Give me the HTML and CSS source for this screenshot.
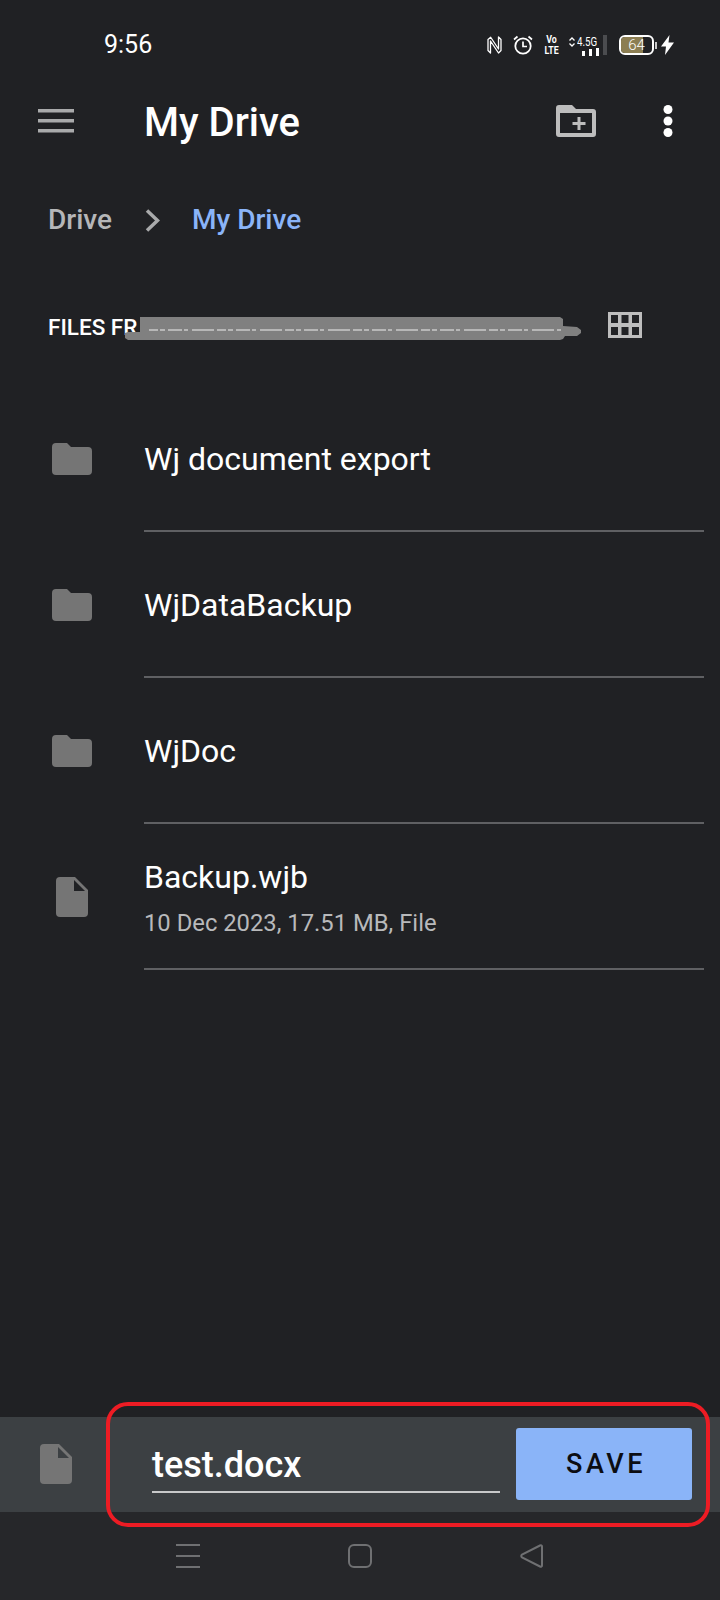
FILE: index.html
```html
<!DOCTYPE html>
<html lang="en">
<head>
  <meta charset="UTF-8">
  <title>My Drive</title>
  <link rel="stylesheet" href="styles.css">
</head>
<body>
  <div class="screen">
    <div class="status-bar">
      <span class="time">9:56</span>
      <div class="status-icons">
        <svg class="ic-nfc" width="15" height="18" viewBox="0 0 15 18"><path d="M4 1 1 3.500v11L3.500 17V5l8 12L14 14.500V3.500L11.500 1v12L3.500 1" fill="none" stroke="#fff" stroke-width="1.300" stroke-linejoin="round"/></svg>
        <svg class="ic-alarm" width="20" height="20" viewBox="0 0 20 20"><circle cx="10" cy="11" r="7.700" fill="none" stroke="#fff" stroke-width="1.800"/><path d="M10 6.500V11.500H14M1 4.500 4.500 1.500M19 4.500 15.500 1.500" fill="none" stroke="#fff" stroke-width="1.700"/></svg>
        <div class="volte"><span>Vo</span><span>LTE</span></div>
        <div class="signal">
          <svg class="ic-updown" width="6" height="10" viewBox="0 0 6 10"><path d="M.5 3.500 3 1l2.500 2.500M.5 6.500 3 9l2.500-2.500" fill="none" stroke="#fff" stroke-width="1.300"/></svg>
          <div class="signal-main">
            <span class="net">4.5G</span>
            <div class="bars"><i class="b1"></i><i class="b2"></i><i class="b3"></i></div>
          </div>
        </div>
        <i class="sim-slot"></i>
        <div class="battery"><span class="battery-fill"></span><span class="battery-num">64</span></div>
        <i class="battery-nub"></i>
        <svg class="ic-bolt" width="13" height="20" viewBox="0 0 13 20"><path d="M8.500 0 0 11.500h5L4 20 13 7.500H7.500z" fill="#fff"/></svg>
      </div>
    </div>

    <div class="toolbar">
      <svg class="ic-menu" width="36" height="24" viewBox="0 0 36 24"><path d="M0 0h36v3.500H0zM0 10h36v3.500H0zM0 20h36v3.500H0z" fill="#a9aaab"/></svg>
      <h1>My Drive</h1>
      <svg class="ic-newfolder" width="40" height="32" viewBox="0 0 40 32"><path d="M3 0h13l4 4h17a3 3 0 0 1 3 3v22a3 3 0 0 1-3 3H3a3 3 0 0 1-3-3V3a3 3 0 0 1 3-3z" fill="#bdbdbd"/><path d="M4 8h32v20H4z" fill="#202124"/><path d="M21.500 12h3v5h5v3h-5v5h-3v-5h-5v-3h5z" fill="#bdbdbd"/></svg>
      <svg class="ic-more" width="10" height="32" viewBox="0 0 10 32"><circle cx="5" cy="4.500" r="4.500" fill="#fff"/><circle cx="5" cy="16" r="4.500" fill="#fff"/><circle cx="5" cy="27.500" r="4.500" fill="#fff"/></svg>
    </div>

    <div class="breadcrumb">
      <span class="crumb">Drive</span>
      <svg class="ic-chevron" width="15" height="23" viewBox="0 0 15 23"><path d="M2 1.500 12.500 11.500 2 21.500" fill="none" stroke="#a9aaab" stroke-width="3.500"/></svg>
      <span class="crumb crumb-current">My Drive</span>
    </div>

    <div class="files-head">
      <span class="files-label">FILES FR</span>
      <svg class="ic-grid" width="34" height="26" viewBox="0 0 34 26"><path d="M0 0h34v26H0z" fill="#bdbdbd"/><path d="M3 3h7v8H3zM13.500 3h7v8h-7zM24 3h7v8h-7zM3 15h7v8H3zM13.500 15h7v8h-7zM24 15h7v8h-7z" fill="#202124"/></svg>
      <svg class="scribble" width="456" height="24" viewBox="0 0 456 24"><path d="M15 0h420l3 2v7l14 1 4 3v3l-4 3h-12l-2 3-3 1H3l-3-2v-5l3-1h12z" fill="#808080"/><path d="M24 13h412" stroke="#eee" stroke-width="1" stroke-dasharray="9 2 5 3 14 2 4 4 22 3"/></svg>
    </div>

    <ul class="file-list">
      <li class="file-row">
        <svg class="ic-folder" width="40" height="32" viewBox="0 0 40 32"><path d="M4 0h11l4 4h17a4 4 0 0 1 4 4v20a4 4 0 0 1-4 4H4a4 4 0 0 1-4-4V4a4 4 0 0 1 4-4z" fill="#757575"/></svg>
        <div class="file-info"><div class="file-name">Wj document export</div></div>
      </li>
      <li class="file-row">
        <svg class="ic-folder" width="40" height="32" viewBox="0 0 40 32"><path d="M4 0h11l4 4h17a4 4 0 0 1 4 4v20a4 4 0 0 1-4 4H4a4 4 0 0 1-4-4V4a4 4 0 0 1 4-4z" fill="#757575"/></svg>
        <div class="file-info"><div class="file-name">WjDataBackup</div></div>
      </li>
      <li class="file-row">
        <svg class="ic-folder" width="40" height="32" viewBox="0 0 40 32"><path d="M4 0h11l4 4h17a4 4 0 0 1 4 4v20a4 4 0 0 1-4 4H4a4 4 0 0 1-4-4V4a4 4 0 0 1 4-4z" fill="#757575"/></svg>
        <div class="file-info"><div class="file-name">WjDoc</div></div>
      </li>
      <li class="file-row">
        <svg class="ic-file" width="32" height="40" viewBox="0 0 32 40"><path d="M4 0h15l13 13v23a4 4 0 0 1-4 4H4a4 4 0 0 1-4-4V4a4 4 0 0 1 4-4z" fill="#757575"/><path d="M18 3v11h11z" fill="#202124"/></svg>
        <div class="file-info">
          <div class="file-name">Backup.wjb</div>
          <div class="file-meta">10 Dec 2023, 17.51 MB, File</div>
        </div>
      </li>
    </ul>

    <div class="save-bar">
      <svg class="ic-file-save" width="32" height="40" viewBox="0 0 32 40"><path d="M4 0h15l13 13v23a4 4 0 0 1-4 4H4a4 4 0 0 1-4-4V4a4 4 0 0 1 4-4z" fill="#757575"/><path d="M18 3v11h11z" fill="#3c4043"/></svg>
      <div class="name-field">test.docx</div>
      <button class="save-btn" type="button">SAVE</button>
      <div class="highlight"></div>
    </div>

    <div class="nav-bar">
      <svg width="24" height="24" viewBox="0 0 24 24"><path d="M0 1h24M0 12h24M0 23h24" stroke="#6f7072" stroke-width="2"/></svg>
      <svg width="24" height="24" viewBox="0 0 24 24"><rect x="1" y="1" width="22" height="22" rx="5" fill="none" stroke="#6f7072" stroke-width="2"/></svg>
      <svg width="24" height="24" viewBox="0 0 24 24"><path d="M22 2.500c0-1-1-1.500-2-1L2 10.500c-1 .7-1 2.300 0 3l18 9c1 .5 2 0 2-1z" fill="none" stroke="#6f7072" stroke-width="2"/></svg>
    </div>
  </div>
</body>
</html>
```

FILE: styles.css
```css
* {
  box-sizing: border-box;
}

body {
  margin: 0;
  background: #202124;
  font-family: Roboto, "Noto Sans", sans-serif;
  color: #fff;
}

.screen {
  width: 720px;
  height: 1600px;
  display: flex;
  flex-direction: column;
  overflow: hidden;
}

/* status bar */
.status-bar {
  height: 80px;
  padding: 35px 46px 0 104px;
  display: flex;
  justify-content: space-between;
  align-items: flex-start;
}

.time {
  font-size: 25px;
  line-height: 20px;
}

.status-icons {
  display: flex;
  align-items: center;
  height: 20px;
}

.ic-alarm {
  margin-left: 11px;
}

.volte {
  margin-left: 11px;
  display: flex;
  flex-direction: column;
  font-size: 10px;
  line-height: 10px;
  font-weight: 700;
  align-items: center;
  width: 15px;
  transform: scale(0.88, 1.1);
}

.signal {
  margin-left: 10px;
  display: flex;
  align-items: flex-start;
  height: 20px;
}

.ic-updown {
  margin-top: 2px;
}

.signal-main {
  margin-left: 2px;
  width: 22px;
  display: flex;
  flex-direction: column;
}

.net {
  font-size: 13px;
  line-height: 12px;
  margin-top: 1px;
  white-space: nowrap;
  transform: scaleX(0.75);
  transform-origin: left center;
}

.bars {
  display: flex;
  justify-content: flex-end;
  align-items: flex-end;
  gap: 4px;
  height: 8px;
}

.bars i {
  display: block;
  width: 3px;
  background: #fff;
}

.bars .b1 {
  height: 5px;
}

.bars .b2 {
  height: 7px;
}

.bars .b3 {
  height: 8px;
}

.sim-slot {
  display: block;
  margin-left: 4px;
  width: 4px;
  height: 20px;
  background: #4b4c4f;
}

.battery {
  position: relative;
  margin-left: 12px;
  width: 35px;
  height: 20px;
  border: 2px solid #fff;
  border-radius: 6px;
  overflow: hidden;
  display: flex;
  align-items: center;
  justify-content: center;
}

.battery-fill {
  position: absolute;
  left: 0;
  top: 0;
  bottom: 0;
  width: 22px;
  background: #8c7e52;
}

.battery-num {
  position: relative;
  font-size: 15px;
  line-height: 16px;
  font-weight: 300;
}

.battery-nub {
  display: block;
  margin-left: 1px;
  width: 2px;
  height: 7px;
  background: #c9c9c9;
}

.ic-bolt {
  margin-left: 4px;
}

/* toolbar */
.toolbar {
  height: 86px;
  padding: 0 47px 0 38px;
  display: flex;
  align-items: center;
}

.ic-menu,
.ic-newfolder,
.ic-more {
  margin-bottom: 5px;
}

.toolbar h1 {
  margin: 0 0 0 70px;
  flex: 1;
  font-size: 40px;
  line-height: 44px;
  font-weight: 500;
}

.ic-more {
  margin-left: 67px;
}

/* breadcrumb */
.breadcrumb {
  height: 106px;
  padding: 2px 0 0 48px;
  display: flex;
  align-items: center;
}

.crumb {
  font-size: 28px;
  line-height: 36px;
  font-weight: 500;
  color: #b5b6b8;
}

.crumb-current {
  margin-left: 32px;
  color: #8ab4f8;
}

.ic-chevron {
  margin-left: 33px;
}

/* files heading */
.files-head {
  position: relative;
  height: 106px;
  padding: 0 78px 0 48px;
  display: flex;
  align-items: center;
  justify-content: space-between;
}

.files-label {
  margin-top: 4px;
  font-size: 22.500px;
  line-height: 28px;
  font-weight: 500;
}

.scribble {
  position: absolute;
  left: 125px;
  top: 45px;
}

/* file list */
.file-list {
  list-style: none;
  margin: 8px 0 0;
  padding: 0;
  flex: 1;
}

.file-row {
  height: 146px;
  display: flex;
  align-items: center;
}

.ic-folder {
  margin: 0 52px;
  flex: none;
}

.ic-file {
  margin: 0 56px;
  flex: none;
}

.file-info {
  flex: 1;
  height: 100%;
  margin-right: 16px;
  padding-top: 2px;
  display: flex;
  flex-direction: column;
  justify-content: center;
  border-bottom: 2px solid #5f6063;
}

.file-name {
  font-size: 32px;
  line-height: 40px;
}

.file-meta {
  margin-top: 10px;
  margin-bottom: -2px;
  font-size: 23.800px;
  line-height: 32px;
  color: #b8b9bb;
}

/* save bar */
.save-bar {
  position: relative;
  height: 95px;
  padding: 11px 28px 12px 40px;
  display: flex;
  align-items: center;
  background: #3c4043;
}

.ic-file-save {
  flex: none;
}

.name-field {
  margin-left: 80px;
  margin-top: 1px;
  width: 348px;
  height: 56px;
  font-size: 36px;
  line-height: 57px;
  font-weight: 500;
  border-bottom: 2px solid #c8c9ca;
}

.save-btn {
  margin-left: 16px;
  padding-left: 10px;
  width: 176px;
  height: 72px;
  border: none;
  border-radius: 3px;
  background: #8ab4f8;
  color: #0c0d12;
  font-family: inherit;
  font-size: 27px;
  font-weight: 500;
  letter-spacing: 3.500px;
}

.highlight {
  position: absolute;
  left: 106px;
  top: -15px;
  width: 604px;
  height: 125px;
  border: 4px solid #ed1c24;
  border-radius: 22px;
}

/* nav bar */
.nav-bar {
  height: 88px;
  padding: 32px 176px 0;
  display: flex;
  justify-content: space-between;
  align-items: flex-start;
  background: #26272a;
}
```
